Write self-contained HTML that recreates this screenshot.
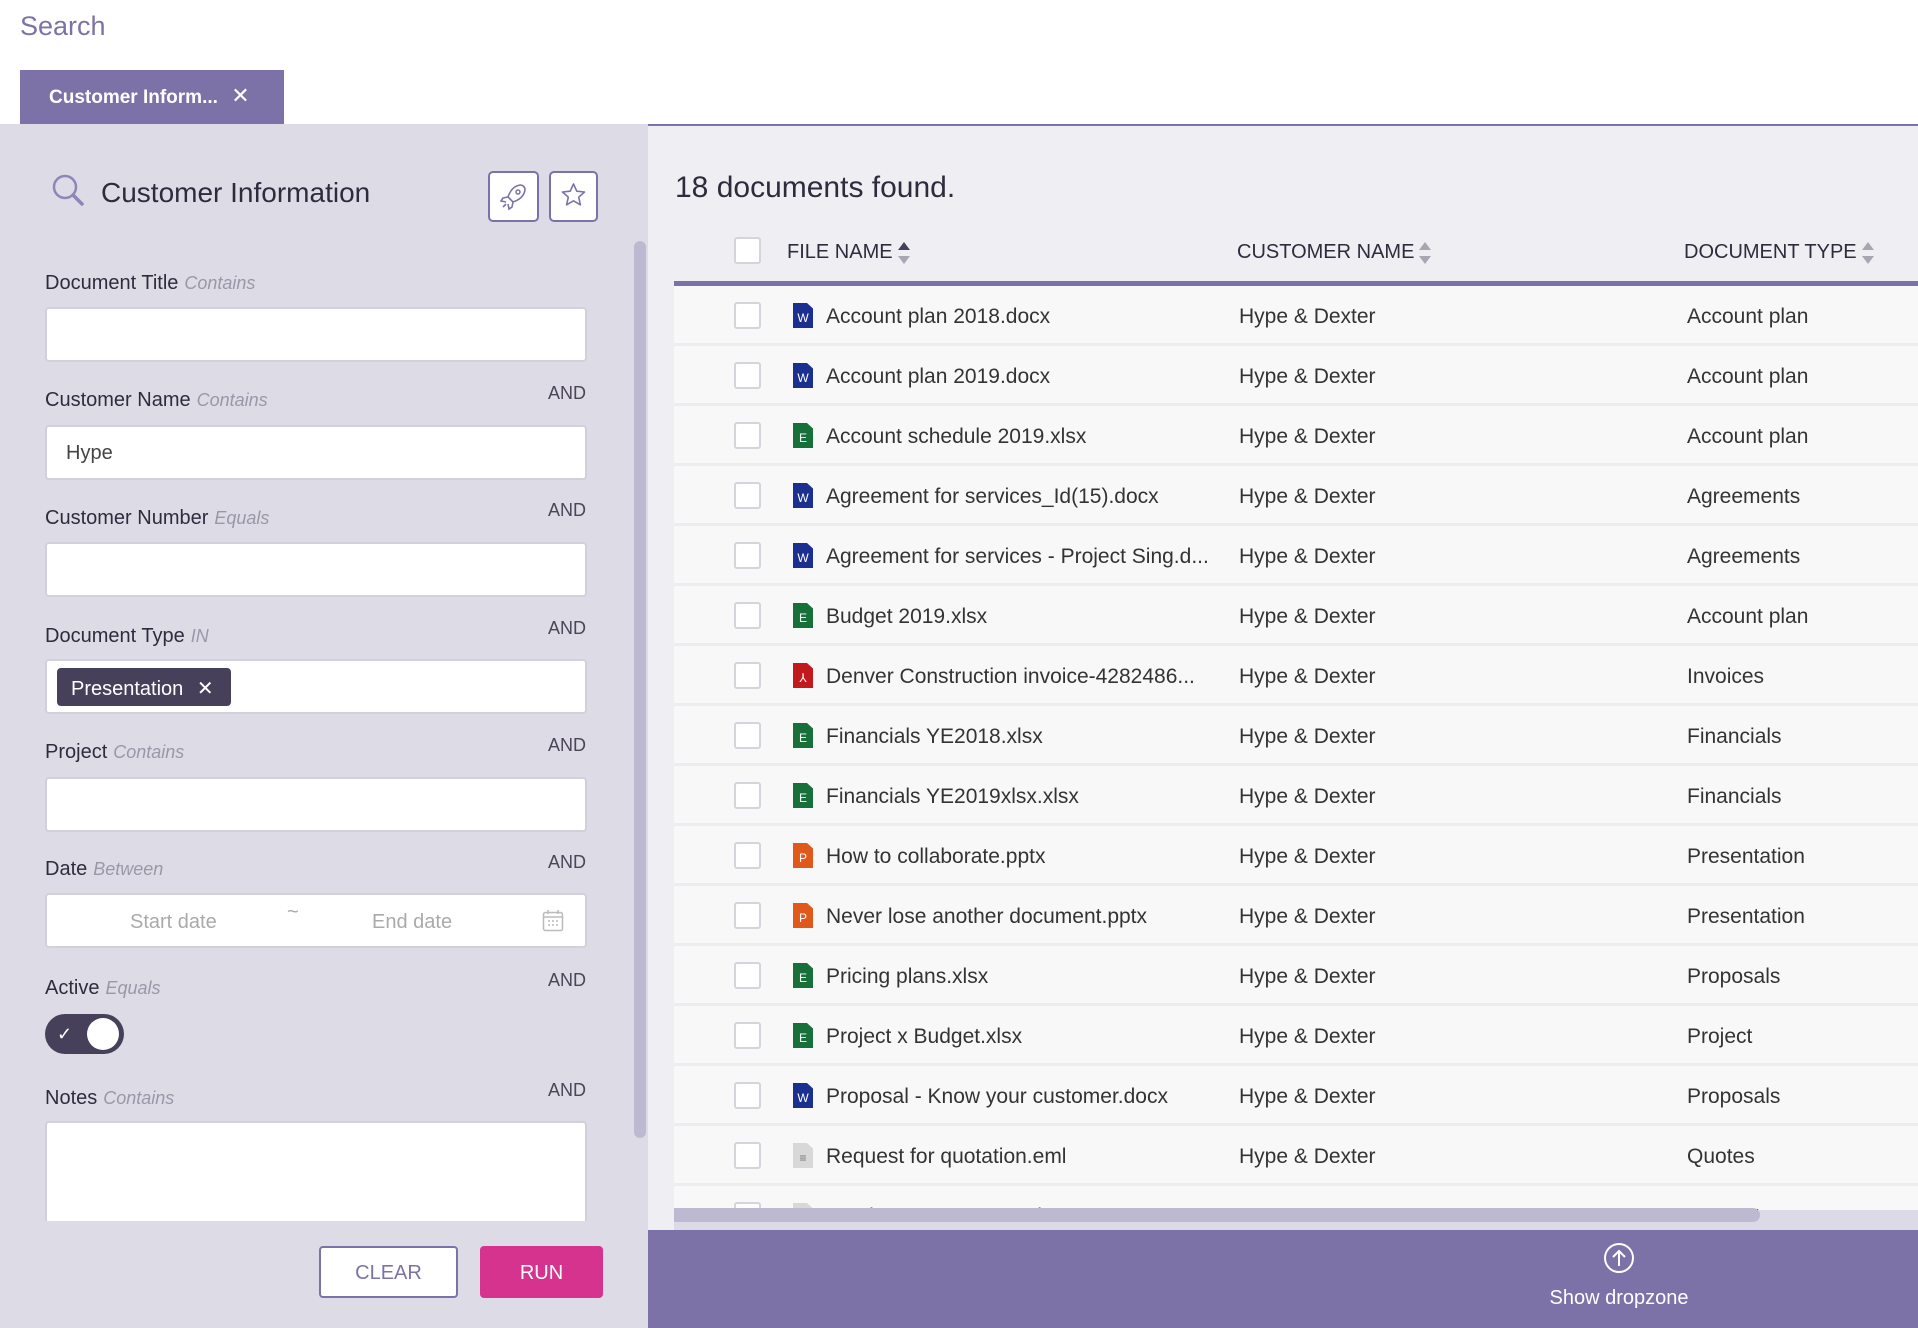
<!DOCTYPE html>
<html><head><meta charset="utf-8"><style>
*{box-sizing:border-box;margin:0;padding:0}
body{width:1918px;height:1328px;overflow:hidden;background:#fff;font-family:"Liberation Sans",sans-serif;position:relative;color:#2f2b3d}
.a{position:absolute}
.lbl{position:absolute;left:45px;font-size:20px;color:#2f2b3d}
.lbl i{color:#9a97a8;font-size:18px;margin-left:6px}
.and{position:absolute;left:548px;font-size:18px;color:#4a4658}
.inp{position:absolute;left:45px;width:542px;height:55px;background:#fff;border:2px solid #d2d0da;border-radius:4px}
.row{position:absolute;left:674px;width:1244px;height:60px;background:#f8f8f9;border-bottom:3px solid #ececf1}
.row .cb{position:absolute;left:60px;top:16px;width:27px;height:27px;border:2px solid #d4d4da;border-radius:3px;background:#fff}
.row .ic{position:absolute;left:119px;top:17px;width:20px;height:25px;clip-path:polygon(0 0,70% 0,100% 22%,100% 100%,0 100%);color:#fff;font-size:12px;text-align:center;line-height:30px}
.row .t{position:absolute;top:19px;font-size:21px;color:#333;white-space:nowrap}
.hd{position:absolute;top:241px;font-size:20px;color:#2f2b3d}
.sort{display:inline-block;vertical-align:middle;margin-left:5px;width:12px;height:22px;position:relative}
.sort:before{content:"";position:absolute;left:0;top:0;border:6px solid transparent;border-bottom:8px solid #a8a6b0;border-top:0}
.sort:after{content:"";position:absolute;left:0;bottom:0;border:6px solid transparent;border-top:8px solid #a8a6b0;border-bottom:0}
.sort.on:before{border-bottom-color:#46405a}
</style></head><body>
<div class="a" style="left:20px;top:11px;font-size:27px;color:#7d72a8">Search</div>
<div class="a" style="left:20px;top:70px;width:264px;height:54px;background:#7d72a8;color:#fff;font-weight:bold;font-size:19px;padding:13px 0 0 29px">Customer Inform... <span style="font-weight:normal;font-size:22px;margin-left:8px">✕</span></div>
<div class="a" style="left:0;top:124px;width:648px;height:1204px;background:#dddce6"></div>
<div class="a" style="left:648px;top:124px;width:1270px;height:1106px;background:#efeff3;border-top:2px solid #7d72a8"></div>
<svg class="a" style="left:50px;top:172px" width="36" height="36" viewBox="0 0 36 36"><circle cx="15" cy="15" r="11" fill="none" stroke="#8f86b8" stroke-width="2.5"/><line x1="23" y1="23" x2="32" y2="32" stroke="#8f86b8" stroke-width="3.5" stroke-linecap="round"/></svg>
<div class="a" style="left:101px;top:177px;font-size:28px;color:#2f2b3d">Customer Information</div>
<div class="a" style="left:488px;top:171px;width:51px;height:51px;border:2px solid #7d72a8;border-radius:5px;background:#fff"><svg width="47" height="47" viewBox="0 0 47 47"><path d="M30 12c-6 1-10 6-12 12l5 5c6-2 11-6 12-12 0-3-2-5-5-5zM18 24l-5 1-2 3 5 1M23 29l-1 5-3 2-1-5M16 31l-3 3" fill="none" stroke="#7d72a8" stroke-width="1.6"/><circle cx="28" cy="19" r="2" fill="none" stroke="#7d72a8" stroke-width="1.5"/></svg></div>
<div class="a" style="left:549px;top:171px;width:49px;height:51px;border:2px solid #7d72a8;border-radius:5px;background:#fff"><svg width="45" height="47" viewBox="0 0 45 47"><path d="M22.5 11l3.3 7.2 7.7.8-5.8 5.2 1.7 7.6-6.9-4-6.9 4 1.7-7.6-5.8-5.2 7.7-.8z" fill="none" stroke="#7d72a8" stroke-width="1.6" stroke-linejoin="round"/></svg></div>
<div class="a" style="left:634px;top:241px;width:12px;height:897px;background:#bdb9d0;border-radius:6px"></div>

<div class="lbl" style="top:272px">Document Title<i>Contains</i></div>
<div class="inp" style="top:307px"></div>
<div class="lbl" style="top:389px">Customer Name<i>Contains</i></div><div class="and" style="top:383px">AND</div>
<div class="inp" style="top:425px;font-size:20px;color:#444;padding:15px 0 0 19px">Hype</div>
<div class="lbl" style="top:507px">Customer Number<i>Equals</i></div><div class="and" style="top:500px">AND</div>
<div class="inp" style="top:542px"></div>
<div class="lbl" style="top:625px">Document Type<i>IN</i></div><div class="and" style="top:618px">AND</div>
<div class="inp" style="top:659px"><div class="a" style="left:10px;top:7px;width:174px;height:38px;background:#46405a;border-radius:4px;color:#fff;font-size:20px;padding:8px 0 0 14px">Presentation <span style="margin-left:8px">✕</span></div></div>
<div class="lbl" style="top:741px">Project<i>Contains</i></div><div class="and" style="top:735px">AND</div>
<div class="inp" style="top:777px"></div>
<div class="lbl" style="top:858px">Date<i>Between</i></div><div class="and" style="top:852px">AND</div>
<div class="inp" style="top:893px;font-size:20px;color:#aaa"><span class="a" style="left:83px;top:16px">Start date</span><span class="a" style="left:240px;top:6px">~</span><span class="a" style="left:325px;top:16px">End date</span>
<svg class="a" style="left:495px;top:14px" width="22" height="24" viewBox="0 0 22 24"><rect x="1.5" y="3.5" width="19" height="18" rx="2" fill="none" stroke="#bbb" stroke-width="1.5"/><line x1="1.5" y1="8" x2="20.5" y2="8" stroke="#bbb" stroke-width="1.5"/><line x1="6" y1="1" x2="6" y2="5" stroke="#bbb" stroke-width="1.5"/><line x1="16" y1="1" x2="16" y2="5" stroke="#bbb" stroke-width="1.5"/><path d="M6 12h2M10 12h2M14 12h2M6 16h2M10 16h2M14 16h2" stroke="#bbb" stroke-width="1.5"/></svg></div>
<div class="lbl" style="top:977px">Active<i>Equals</i></div><div class="and" style="top:970px">AND</div>
<div class="a" style="left:45px;top:1014px;width:79px;height:40px;background:#46405a;border-radius:20px"><span class="a" style="left:12px;top:10px;color:#fff;font-size:18px">✓</span><div class="a" style="left:42px;top:4px;width:32px;height:32px;border-radius:50%;background:#fff"></div></div>
<div class="lbl" style="top:1087px">Notes<i>Contains</i></div><div class="and" style="top:1080px">AND</div>
<div class="inp" style="top:1121px;height:100px;border-bottom:none;border-radius:4px 4px 0 0"></div>
<div class="a" style="left:0;top:1221px;width:634px;height:107px;background:#dddce6"></div>
<div class="a" style="left:319px;top:1246px;width:139px;height:52px;border:2px solid #7d72a8;border-radius:4px;background:#fff;color:#7d72a8;font-size:20px;text-align:center;line-height:50px">CLEAR</div>
<div class="a" style="left:480px;top:1246px;width:123px;height:52px;background:#d6338e;border-radius:4px;color:#fff;font-size:20px;text-align:center;line-height:54px">RUN</div>

<div class="a" style="left:675px;top:171px;font-size:30px;color:#2f2b3d">18 documents found.</div>
<div class="a" style="left:734px;top:237px;width:27px;height:27px;border:2px solid #d4d4da;border-radius:3px;background:#fff"></div>
<div class="hd" style="left:787px">FILE NAME<span class="sort on"></span></div>
<div class="hd" style="left:1237px">CUSTOMER NAME<span class="sort"></span></div>
<div class="hd" style="left:1684px">DOCUMENT TYPE<span class="sort"></span></div>
<div class="a" style="left:674px;top:281px;width:1244px;height:5px;background:#7d72a8"></div>
<div class="a" style="left:674px;top:286px;width:1244px;height:924px;overflow:hidden">
<div style="position:relative;left:-674px;top:-286px">
<div class="row" style="top:286px"><div class="cb"></div><div class="ic" style="background:#1a2f8f">W</div><div class="t" style="left:152px">Account plan 2018.docx</div><div class="t" style="left:565px">Hype &amp; Dexter</div><div class="t" style="left:1013px">Account plan</div></div>
<div class="row" style="top:346px"><div class="cb"></div><div class="ic" style="background:#1a2f8f">W</div><div class="t" style="left:152px">Account plan 2019.docx</div><div class="t" style="left:565px">Hype &amp; Dexter</div><div class="t" style="left:1013px">Account plan</div></div>
<div class="row" style="top:406px"><div class="cb"></div><div class="ic" style="background:#17703a">E</div><div class="t" style="left:152px">Account schedule 2019.xlsx</div><div class="t" style="left:565px">Hype &amp; Dexter</div><div class="t" style="left:1013px">Account plan</div></div>
<div class="row" style="top:466px"><div class="cb"></div><div class="ic" style="background:#1a2f8f">W</div><div class="t" style="left:152px">Agreement for services_Id(15).docx</div><div class="t" style="left:565px">Hype &amp; Dexter</div><div class="t" style="left:1013px">Agreements</div></div>
<div class="row" style="top:526px"><div class="cb"></div><div class="ic" style="background:#1a2f8f">W</div><div class="t" style="left:152px">Agreement for services - Project Sing.d...</div><div class="t" style="left:565px">Hype &amp; Dexter</div><div class="t" style="left:1013px">Agreements</div></div>
<div class="row" style="top:586px"><div class="cb"></div><div class="ic" style="background:#17703a">E</div><div class="t" style="left:152px">Budget 2019.xlsx</div><div class="t" style="left:565px">Hype &amp; Dexter</div><div class="t" style="left:1013px">Account plan</div></div>
<div class="row" style="top:646px"><div class="cb"></div><div class="ic" style="background:#c2191c">⅄</div><div class="t" style="left:152px">Denver Construction invoice-4282486...</div><div class="t" style="left:565px">Hype &amp; Dexter</div><div class="t" style="left:1013px">Invoices</div></div>
<div class="row" style="top:706px"><div class="cb"></div><div class="ic" style="background:#17703a">E</div><div class="t" style="left:152px">Financials YE2018.xlsx</div><div class="t" style="left:565px">Hype &amp; Dexter</div><div class="t" style="left:1013px">Financials</div></div>
<div class="row" style="top:766px"><div class="cb"></div><div class="ic" style="background:#17703a">E</div><div class="t" style="left:152px">Financials YE2019xlsx.xlsx</div><div class="t" style="left:565px">Hype &amp; Dexter</div><div class="t" style="left:1013px">Financials</div></div>
<div class="row" style="top:826px"><div class="cb"></div><div class="ic" style="background:#e0581c">P</div><div class="t" style="left:152px">How to collaborate.pptx</div><div class="t" style="left:565px">Hype &amp; Dexter</div><div class="t" style="left:1013px">Presentation</div></div>
<div class="row" style="top:886px"><div class="cb"></div><div class="ic" style="background:#e0581c">P</div><div class="t" style="left:152px">Never lose another document.pptx</div><div class="t" style="left:565px">Hype &amp; Dexter</div><div class="t" style="left:1013px">Presentation</div></div>
<div class="row" style="top:946px"><div class="cb"></div><div class="ic" style="background:#17703a">E</div><div class="t" style="left:152px">Pricing plans.xlsx</div><div class="t" style="left:565px">Hype &amp; Dexter</div><div class="t" style="left:1013px">Proposals</div></div>
<div class="row" style="top:1006px"><div class="cb"></div><div class="ic" style="background:#17703a">E</div><div class="t" style="left:152px">Project x Budget.xlsx</div><div class="t" style="left:565px">Hype &amp; Dexter</div><div class="t" style="left:1013px">Project</div></div>
<div class="row" style="top:1066px"><div class="cb"></div><div class="ic" style="background:#1a2f8f">W</div><div class="t" style="left:152px">Proposal - Know your customer.docx</div><div class="t" style="left:565px">Hype &amp; Dexter</div><div class="t" style="left:1013px">Proposals</div></div>
<div class="row" style="top:1126px"><div class="cb"></div><div class="ic" style="background:#d8d8d8;color:#777">≡</div><div class="t" style="left:152px">Request for quotation.eml</div><div class="t" style="left:565px">Hype &amp; Dexter</div><div class="t" style="left:1013px">Quotes</div></div>
<div class="row" style="top:1186px"><div class="cb"></div><div class="ic" style="background:#d8d8d8"></div><div class="t" style="left:152px">Service agreement.eml</div><div class="t" style="left:565px">Hype &amp; Dexter</div><div class="t" style="left:1013px">Support</div></div>
</div></div>
<div class="a" style="left:674px;top:1210px;width:1244px;height:20px;background:#dcdae6"></div>
<div class="a" style="left:674px;top:1208px;width:1086px;height:14px;background:#bdb9d0;border-radius:0 7px 7px 0"></div>
<div class="a" style="left:648px;top:1230px;width:1270px;height:98px;background:#7d72a8"></div>
<svg class="a" style="left:1603px;top:1242px" width="32" height="32" viewBox="0 0 32 32"><circle cx="16" cy="16" r="14" fill="none" stroke="#fff" stroke-width="2"/><path d="M16 24V9M10 15l6-6 6 6" fill="none" stroke="#fff" stroke-width="2"/></svg>
<div class="a" style="left:1543px;top:1287px;width:152px;text-align:center;color:#fff;font-size:20px">Show dropzone</div>
</body></html>
